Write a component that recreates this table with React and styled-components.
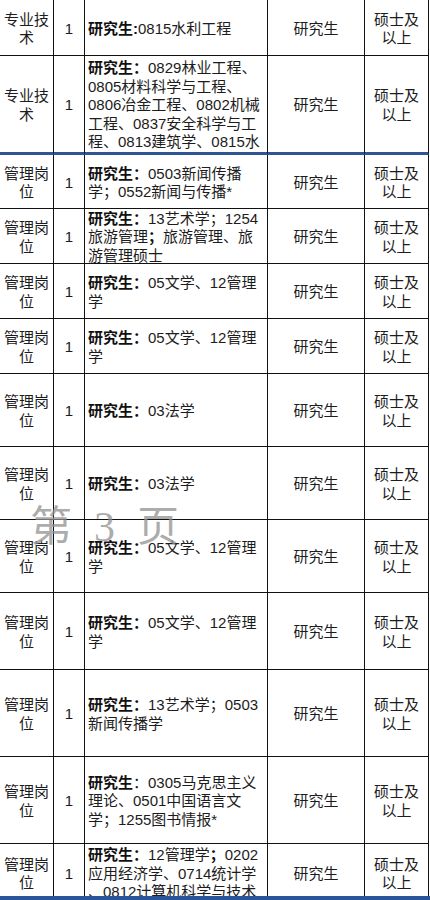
import styled, { createGlobalStyle } from 'styled-components';

const GlobalStyle = createGlobalStyle`
  * { box-sizing: border-box; }
  body {
    margin: 0;
    background: #fff;
    font-family: "Liberation Sans", "Noto Sans CJK SC", sans-serif;
    color: #1c1c1c;
  }
`;

const Page = styled.div`
  position: relative;
  width: 430px;
  height: 900px;
  overflow: hidden;
  background: #fff;
`;

const Viewport = styled.div`
  height: 896px;
  overflow: hidden;
`;

const BottomBar = styled.div`
  height: 4px;
  background: #2b559a;
`;

const Row = styled.div`
  display: grid;
  grid-template-columns: 54px 31px 183px 97px 64px;
  width: 429px;
  height: ${({ $h }) => $h}px;
`;

const Cell = styled.div`
  border-right: 1px solid #111;
  border-bottom: ${({ $blue }) => ($blue ? '3px solid #2f5597' : '1px solid #111')};
  display: flex;
  flex-direction: column;
  justify-content: center;
  align-items: ${({ $left }) => ($left ? 'flex-start' : 'center')};
  text-align: ${({ $left }) => ($left ? 'left' : 'center')};
  padding: 3px 0 0 ${({ $left }) => ($left ? '3px' : '0')};
  overflow: hidden;
  font-size: 15px;
  line-height: 18.5px;
`;

const Line = styled.span`
  display: block;
  white-space: nowrap;
`;

const Bold = styled.b`
  font-weight: 700;
  color: #111;
`;

const Watermark = styled.div`
  position: absolute;
  left: 30px;
  top: 499px;
  display: flex;
  gap: 22px;
  align-items: center;
  font-family: "Liberation Serif", "Noto Sans CJK SC", serif;
  font-size: 42px;
  line-height: 56px;
  color: rgba(145, 145, 145, 0.75);
  pointer-events: none;
`;

const b = (t) => ({ b: t });

const label = b('研究生：');
const wenxue = [[label, '05文学、12管理'], ['学']];
const faxue = [[label, '03法学']];

const rows = [
  { h: 56, post: ['专业技', '术'], text: [[b('研究生:'), '0815水利工程']] },
  {
    h: 99,
    blue: true,
    post: ['专业技', '术'],
    text: [
      [label, '0829林业工程、'],
      ['0805材料科学与工程、'],
      ['0806冶金工程、0802机械'],
      ['工程、0837安全科学与工'],
      ['程、0813建筑学、0815水'],
    ],
  },
  { h: 54, text: [[label, '0503新闻传播'], ['学；0552新闻与传播*']] },
  { h: 55, text: [[label, '13艺术学；1254'], ['旅游管理', b('；'), '旅游管理、旅'], ['游管理硕士']] },
  { h: 55, text: wenxue },
  { h: 55, text: wenxue },
  { h: 73, text: faxue },
  { h: 73, text: faxue },
  { h: 73, text: wenxue },
  { h: 77, text: wenxue },
  { h: 87, text: [[label, '13艺术学；0503'], ['新闻传播学']] },
  { h: 87, text: [[b('研究生'), '：0305马克思主义'], ['理论、0501中国语言文'], ['学；1255图书情报*']] },
  { h: 58, text: [[label, '12管理学', b('；'), '0202'], ['应用经济学、0714统计学'], ['、0812计算机科学与技术']] },
];

const renderSeg = (seg, i) => (typeof seg === 'string' ? <span key={i}>{seg}</span> : <Bold key={i}>{seg.b}</Bold>);

export default function App() {
  return (
    <Page>
      <GlobalStyle />
      <Viewport>
        {rows.map((r, i) => {
          const post = r.post || ['管理岗', '位'];
          return (
            <Row key={i} $h={r.h}>
              <Cell $blue={r.blue}>
                {post.map((p) => (
                  <Line key={p}>{p}</Line>
                ))}
              </Cell>
              <Cell $blue={r.blue}>1</Cell>
              <Cell $blue={r.blue} $left>
                {r.text.map((line, j) => (
                  <Line key={j}>{line.map(renderSeg)}</Line>
                ))}
              </Cell>
              <Cell $blue={r.blue}>研究生</Cell>
              <Cell $blue={r.blue}>
                <Line>硕士及</Line>
                <Line>以上</Line>
              </Cell>
            </Row>
          );
        })}
      </Viewport>
      <BottomBar />
      <Watermark>
        <span>第</span>
        <span>3</span>
        <span>页</span>
      </Watermark>
    </Page>
  );
}
